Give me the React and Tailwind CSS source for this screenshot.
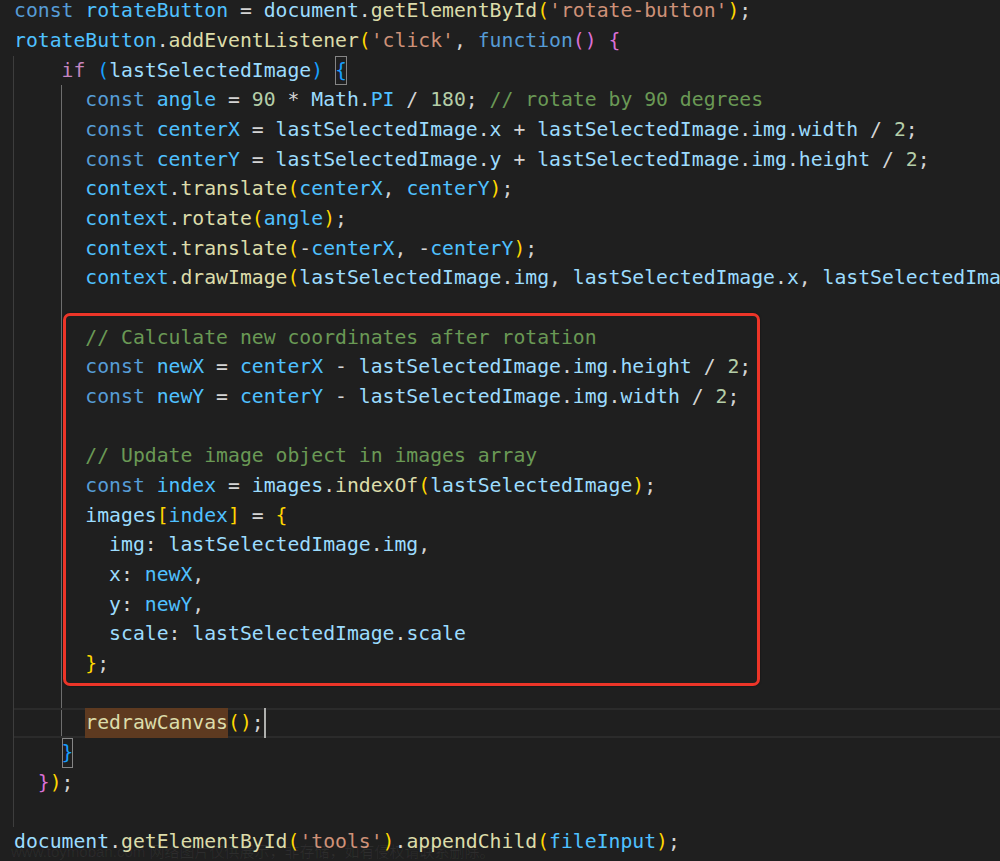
// Editor snapshot: a JS snippet in a dark code view, with one block boxed in red.

const tone = {
  k: "text-[#569cd6]", // keyword
  c: "text-[#c586c0]", // control flow
  v: "text-[#9cdcfe]", // variable / property
  n: "text-[#4fc1ff]", // constant
  f: "text-[#dcdcaa]", // function
  s: "text-[#ce9178]", // string
  m: "text-[#b5cea8]", // number
  g: "text-[#6a9955]", // comment
  p: "text-[#d4d4d4]", // punctuation
  y: "text-[#ffd700]", // bracket level 1
  o: "text-[#da70d6]", // bracket level 2
  b: "text-[#179fff]", // bracket level 3
  B: "inline-block align-top h-[29.68px] text-[#179fff] shadow-[inset_0_0_0_1px_#858585]",
  h: "inline-block align-top h-[29.68px] bg-[#5e3a20] text-[#dcdcaa]",
  cur: "inline-block align-top w-[2px] h-[29.68px] bg-[#aeafad]",
};

const Line = ({ tokens = [], className = "" }) => (
  <div className={`h-[29.68px] leading-[29.68px] whitespace-pre ${className}`}>
    {tokens.map(([c, t], i) => (
      <span key={i} className={tone[c]}>
        {t}
      </span>
    ))}
  </div>
);

const head = [
  [["k", "const"], ["p", " "], ["n", "rotateButton"], ["p", " = "], ["v", "document"], ["p", "."], ["f", "getElementById"], ["y", "("], ["s", "'rotate-button'"], ["y", ")"], ["p", ";"]],
  [["n", "rotateButton"], ["p", "."], ["f", "addEventListener"], ["y", "("], ["s", "'click'"], ["p", ", "], ["k", "function"], ["o", "()"], ["p", " "], ["o", "{"]],
];

const ifLine = [["p", "    "], ["c", "if"], ["p", " "], ["b", "("], ["v", "lastSelectedImage"], ["b", ")"], ["p", " "], ["B", "{"]];

// body of the if block, indent relative to the second guide
const body = [
  [["p", "  "], ["k", "const"], ["p", " "], ["n", "angle"], ["p", " = "], ["m", "90"], ["p", " * "], ["v", "Math"], ["p", "."], ["n", "PI"], ["p", " / "], ["m", "180"], ["p", "; "], ["g", "// rotate by 90 degrees"]],
  [["p", "  "], ["k", "const"], ["p", " "], ["n", "centerX"], ["p", " = "], ["v", "lastSelectedImage"], ["p", "."], ["v", "x"], ["p", " + "], ["v", "lastSelectedImage"], ["p", "."], ["v", "img"], ["p", "."], ["v", "width"], ["p", " / "], ["m", "2"], ["p", ";"]],
  [["p", "  "], ["k", "const"], ["p", " "], ["n", "centerY"], ["p", " = "], ["v", "lastSelectedImage"], ["p", "."], ["v", "y"], ["p", " + "], ["v", "lastSelectedImage"], ["p", "."], ["v", "img"], ["p", "."], ["v", "height"], ["p", " / "], ["m", "2"], ["p", ";"]],
  [["p", "  "], ["n", "context"], ["p", "."], ["f", "translate"], ["y", "("], ["n", "centerX"], ["p", ", "], ["n", "centerY"], ["y", ")"], ["p", ";"]],
  [["p", "  "], ["n", "context"], ["p", "."], ["f", "rotate"], ["y", "("], ["n", "angle"], ["y", ")"], ["p", ";"]],
  [["p", "  "], ["n", "context"], ["p", "."], ["f", "translate"], ["y", "("], ["p", "-"], ["n", "centerX"], ["p", ", -"], ["n", "centerY"], ["y", ")"], ["p", ";"]],
  [["p", "  "], ["n", "context"], ["p", "."], ["f", "drawImage"], ["y", "("], ["v", "lastSelectedImage"], ["p", "."], ["v", "img"], ["p", ", "], ["v", "lastSelectedImage"], ["p", "."], ["v", "x"], ["p", ", "], ["v", "lastSelectedImage"], ["p", "."], ["v", "y"], ["y", ")"], ["p", ";"]],
  [],
  [["p", "  "], ["g", "// Calculate new coordinates after rotation"]],
  [["p", "  "], ["k", "const"], ["p", " "], ["n", "newX"], ["p", " = "], ["n", "centerX"], ["p", " - "], ["v", "lastSelectedImage"], ["p", "."], ["v", "img"], ["p", "."], ["v", "height"], ["p", " / "], ["m", "2"], ["p", ";"]],
  [["p", "  "], ["k", "const"], ["p", " "], ["n", "newY"], ["p", " = "], ["n", "centerY"], ["p", " - "], ["v", "lastSelectedImage"], ["p", "."], ["v", "img"], ["p", "."], ["v", "width"], ["p", " / "], ["m", "2"], ["p", ";"]],
  [],
  [["p", "  "], ["g", "// Update image object in images array"]],
  [["p", "  "], ["k", "const"], ["p", " "], ["n", "index"], ["p", " = "], ["v", "images"], ["p", "."], ["f", "indexOf"], ["y", "("], ["v", "lastSelectedImage"], ["y", ")"], ["p", ";"]],
  [["p", "  "], ["v", "images"], ["y", "["], ["n", "index"], ["y", "]"], ["p", " = "], ["y", "{"]],
  [["p", "    "], ["v", "img"], ["p", ": "], ["v", "lastSelectedImage"], ["p", "."], ["v", "img"], ["p", ","]],
  [["p", "    "], ["v", "x"], ["p", ": "], ["n", "newX"], ["p", ","]],
  [["p", "    "], ["v", "y"], ["p", ": "], ["n", "newY"], ["p", ","]],
  [["p", "    "], ["v", "scale"], ["p", ": "], ["v", "lastSelectedImage"], ["p", "."], ["v", "scale"]],
  [["p", "  "], ["y", "}"], ["p", ";"]],
  [],
];

const current = [["p", "  "], ["h", "redrawCanvas"], ["y", "()"], ["p", ";"], ["cur", ""]];

const tail = [
  [["p", "    "], ["B", "}"]],
  [["p", "  "], ["o", "}"], ["y", ")"], ["p", ";"]],
  [],
];

const last = [["v", "document"], ["p", "."], ["f", "getElementById"], ["y", "("], ["s", "'tools'"], ["y", ")"], ["p", "."], ["f", "appendChild"], ["y", "("], ["n", "fileInput"], ["y", ")"], ["p", ";"]];

export default function App() {
  return (
    <div className="relative h-[861px] w-full overflow-hidden bg-[#1f1f1f] font-['DejaVu_Sans_Mono',monospace] text-[19.75px]">
      <div className="mt-[-3.8px] pl-[14px]">
        {head.map((t, i) => (
          <Line key={i} tokens={t} />
        ))}
        <div className="ml-[-1px] border-l border-[#3d3d3d]">
          <Line tokens={ifLine} />
          <div className="ml-[calc(4ch-1px)] border-l border-[#6e6e6e]">
            {body.map((t, i) => (
              <Line key={i} tokens={t} />
            ))}
            <Line
              tokens={current}
              className="ml-[-4ch] pl-[4ch] shadow-[inset_0_2px_0_#2b2b2b,inset_0_-2px_0_#2b2b2b]"
            />
          </div>
          {tail.map((t, i) => (
            <Line key={i} tokens={t} />
          ))}
        </div>
        <Line tokens={last} />
      </div>

      {/* red annotation box */}
      <div className="absolute left-[63px] top-[313px] h-[373px] w-[697px] rounded-[7px] border-[3px] border-[#ec3528] shadow-[0_0_2px_rgba(0,0,0,0.6)]" />

      {/* faint watermark */}
      <div className="absolute left-[11px] top-[843px] whitespace-nowrap font-['Liberation_Sans','Noto_Sans_CJK_SC',sans-serif] text-[15px] leading-[18px] text-white/[0.06]">
        www.toymoban.com 网络图片仅供展示，非存储，如有侵权请联系删除。
      </div>
    </div>
  );
}
